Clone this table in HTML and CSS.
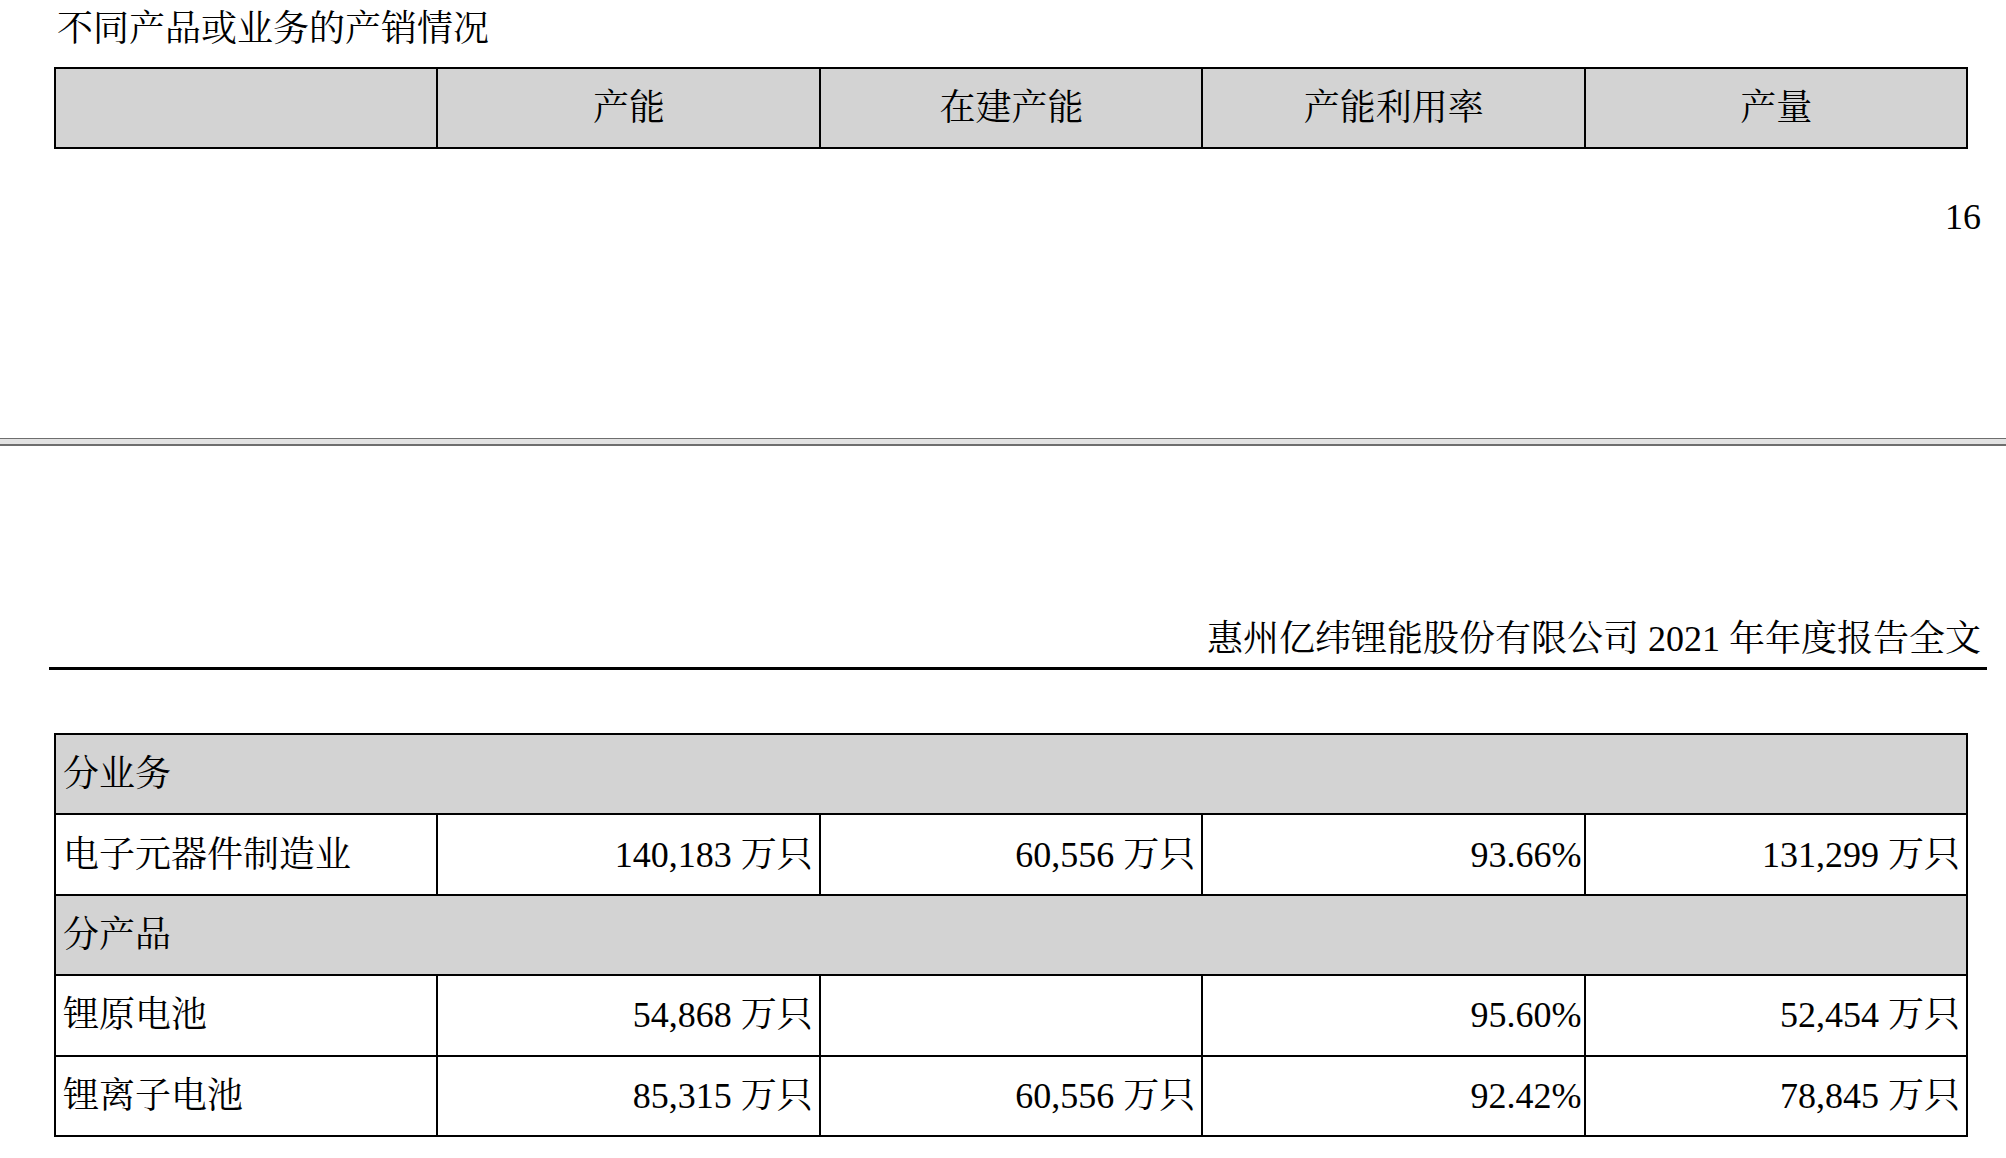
FILE: index.html
```html
<!DOCTYPE html>
<html lang="zh-CN">
<head>
<meta charset="utf-8">
<title>产销情况</title>
<link rel="stylesheet" href="styles.css">
</head>
<body>
<section class="page page-a">
  <h2 class="caption">不同产品或业务的产销情况</h2>
  <table class="grid">
    <colgroup><col class="c"><col class="c"><col class="c"><col class="c"><col class="c"></colgroup>
    <tr class="shade head"><td></td><td>产能</td><td>在建产能</td><td>产能利用率</td><td>产量</td></tr>
  </table>
  <div class="page-num">16</div>
</section>
<div class="page-gap"></div>
<section class="page page-b">
  <header class="running-head">惠州亿纬锂能股份有限公司 2021 年年度报告全文</header>
  <table class="grid">
    <colgroup><col class="c"><col class="c"><col class="c"><col class="c"><col class="c"></colgroup>
    <tr class="shade"><td colspan="5">分业务</td></tr>
    <tr class="data"><td>电子元器件制造业</td><td>140,183 万只</td><td>60,556 万只</td><td class="pct">93.66%</td><td>131,299 万只</td></tr>
    <tr class="shade"><td colspan="5">分产品</td></tr>
    <tr class="data"><td>锂原电池</td><td>54,868 万只</td><td></td><td class="pct">95.60%</td><td>52,454 万只</td></tr>
    <tr class="data"><td>锂离子电池</td><td>85,315 万只</td><td>60,556 万只</td><td class="pct">92.42%</td><td>78,845 万只</td></tr>
  </table>
</section>
</body>
</html>
```

FILE: styles.css
```css
html, body {
  margin: 0;
  padding: 0;
  background: #ffffff;
}

body {
  color: #000000;
  font-family: "Liberation Serif", "Noto Serif CJK SC", "Noto Sans CJK SC", serif;
  font-size: 36px;
}

.page-a {
  box-sizing: border-box;
  height: 438px;
  padding: 0 38px 0 54px;
}

.caption {
  margin: 0;
  height: 67px;
  padding-left: 3px;
  font-size: 36px;
  font-weight: normal;
  line-height: 58px;
}

.grid {
  width: 100%;
  border-collapse: collapse;
  table-layout: fixed;
}

.grid .c {
  width: 20%;
}

.grid tr {
  height: 80.4px;
}

.grid td {
  border: 2px solid #000000;
  padding: 0 6px 0 7px;
  line-height: 40px;
  vertical-align: middle;
  white-space: nowrap;
}

.shade td {
  background: #d3d3d3;
  text-align: left;
}

.head td {
  text-align: center;
}

.data td {
  text-align: right;
}

.data td:first-child {
  text-align: left;
}

.data td.pct {
  padding-right: 2px;
}

.page-num {
  margin: 50px -13px 0 0;
  text-align: right;
  line-height: 36px;
}

.page-gap {
  box-sizing: border-box;
  height: 8px;
  border-top: 1px solid #6e6e6e;
  border-bottom: 2px solid #6e6e6e;
  background: #e2e2e2;
}

.page-b {
  padding: 0 19px 0 49px;
}

.running-head {
  padding: 169px 6px 4px 0;
  line-height: 48px;
  text-align: right;
  border-bottom: 3px solid #000000;
}

.page-b .grid {
  width: calc(100% - 24px);
  margin: 63px 19px 0 5px;
}
```
